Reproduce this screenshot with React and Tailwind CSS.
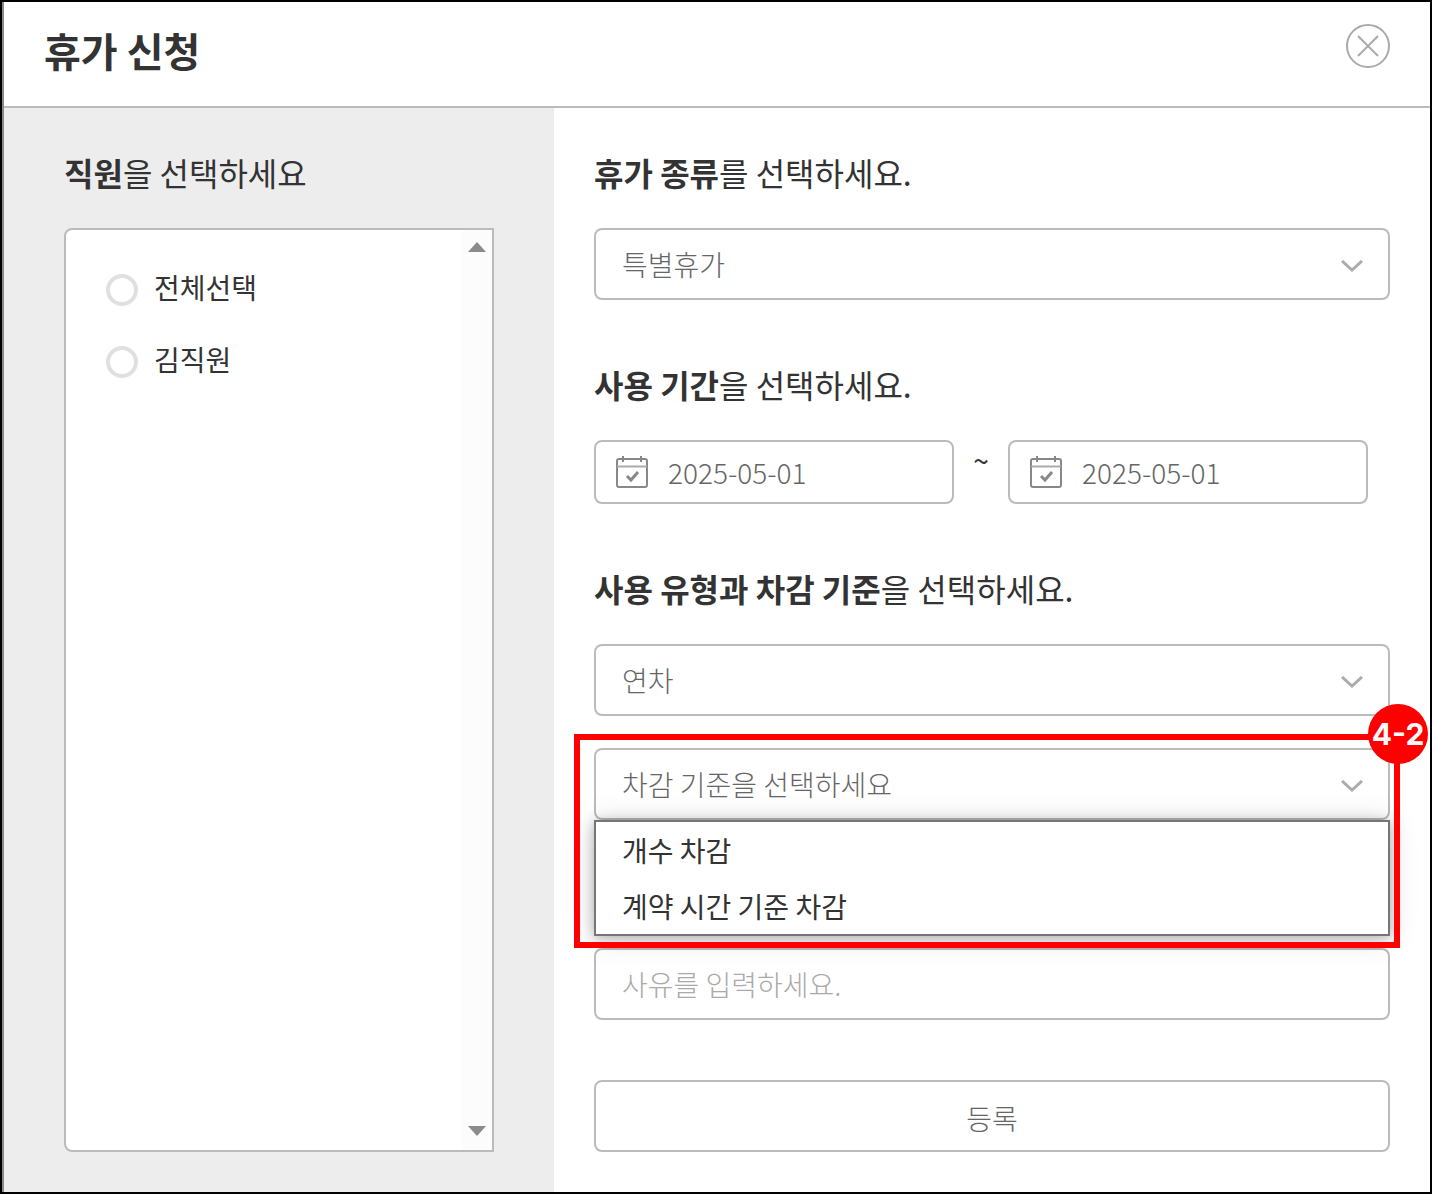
import React, { useState } from 'react';
import { clsx } from 'clsx';

const fieldClass =
  'w-full rounded-lg border-2 border-[#bbb] bg-white text-[28px] font-light text-[#666] outline-none';

const employees = [
  { id: 'all', name: '전체선택' },
  { id: 'kim', name: '김직원' },
];

const CloseIcon = () => (
  <svg className="size-11" viewBox="0 0 44 44" fill="none" stroke="#aaa" strokeWidth="2">
    <circle cx="22" cy="22" r="21" />
    <path d="M12 12l20 20M32 12L12 32" />
  </svg>
);

const ChevronIcon = () => (
  <svg
    className="pointer-events-none absolute top-1/2 right-[27px] -mt-1 h-3 w-[22px]"
    viewBox="0 0 22 12"
    fill="none"
    stroke="#aaa"
    strokeWidth="3"
  >
    <path d="M1 1l10 9l10-9" />
  </svg>
);

const CalendarIcon = () => (
  <svg className="size-8 shrink-0" viewBox="0 0 32 32" fill="none" stroke="#888" strokeWidth="2">
    <rect x="1" y="3" width="30" height="28" rx="2" />
    <path d="M1 10.500h30" stroke="#aaa" />
    <path d="M7 0v6M25 0v6" />
    <path d="M11 20l4 4l7-8" strokeWidth="3" />
  </svg>
);

// Question title, e.g. "휴가 종류를 선택하세요."
const Heading = ({ id, strong, children }) => (
  <h2 id={id} className="text-[32px] leading-11 text-[#333]">
    <strong className="font-bold">{strong}</strong>
    {children}
  </h2>
);

const SelectField = ({ label, value }) => (
  <div className="relative">
    <select aria-label={label} className={clsx(fieldClass, 'block h-18 appearance-none px-[26px]')}>
      <option>{value}</option>
    </select>
    <ChevronIcon />
  </div>
);

const DateField = ({ label, value, onChange }) => (
  <label className={clsx(fieldClass, 'flex h-16 min-w-0 flex-1 items-center gap-5 px-5')}>
    <CalendarIcon />
    <input
      type="text"
      aria-label={label}
      value={value}
      onChange={(e) => onChange(e.target.value)}
      className="w-full min-w-0 bg-transparent outline-none"
    />
  </label>
);

const EmployeeList = () => {
  const [selected, setSelected] = useState(null);

  return (
    <div className="mt-[34px] flex flex-1 rounded-l-lg border-2 border-[#bbb] bg-white">
      <div role="radiogroup" aria-labelledby="employee-title" className="flex-1 py-6 pl-10">
        {employees.map((employee) => (
          <label key={employee.id} className="flex h-18 items-center gap-4 text-[28px] text-[#333]">
            <input
              type="radio"
              name="employee"
              checked={selected === employee.id}
              onChange={() => setSelected(employee.id)}
              className="size-8 appearance-none rounded-full border-4 border-[#e0e0e0] checked:border-[#666]"
            />
            <span className="pb-1.5">{employee.name}</span>
          </label>
        ))}
      </div>
      <div className="flex w-[30px] flex-col items-center justify-between bg-[#fcfcfc] pt-3 pb-3.5">
        <svg className="h-2.5 w-[18px]" viewBox="0 0 18 10" fill="#8b8b8b">
          <path d="M9 0l9 10H0z" />
        </svg>
        <svg className="h-2.5 w-[18px]" viewBox="0 0 18 10" fill="#8b8b8b">
          <path d="M0 0h18l-9 10z" />
        </svg>
      </div>
    </div>
  );
};

// Deduction select with its menu opened and the step marker around it
const DeductionField = () => (
  <div className="relative mt-8">
    <SelectField label="차감 기준" value="차감 기준을 선택하세요" />
    <ul
      role="listbox"
      aria-label="차감 기준"
      className="absolute inset-x-0 top-full border-2 border-[#767676] bg-white text-[28px] leading-14 text-[#333] shadow-[0_2px_28px_rgba(0,0,0,0.15),0_2px_12px_rgba(0,0,0,0.25)]"
    >
      <li role="option" aria-selected="false" className="px-[26px]">
        개수 차감
      </li>
      <li role="option" aria-selected="false" className="px-[26px]">
        계약 시간 기준 차감
      </li>
    </ul>
    <div className="pointer-events-none absolute -top-3.5 -right-2.5 -left-5 h-[214px] border-6 border-[#f00]">
      <span className="absolute -top-9 -right-[34px] flex size-15 items-center justify-center rounded-full bg-[#f00] font-['Inter',sans-serif] text-[30px] font-bold text-[#fafafa]">
        4-2
      </span>
    </div>
  </div>
);

const App = () => {
  const [startDate, setStartDate] = useState('2025-05-01');
  const [endDate, setEndDate] = useState('2025-05-01');

  return (
    <div className="flex min-h-screen flex-col border-2 border-black bg-white font-['Noto_Sans_CJK_KR',sans-serif]">
      <div className="flex flex-1 flex-col border-l-2 border-[#8c8888]">
        <header className="flex h-[106px] items-start justify-between border-b-2 border-[#bbb] px-10">
          <h1 className="pt-5 text-[40px] leading-14 font-bold text-[#333]">휴가 신청</h1>
          <button type="button" aria-label="닫기" className="mt-[22px]">
            <CloseIcon />
          </button>
        </header>

        <main className="grid flex-1 grid-cols-[550px_1fr]">
          <section className="flex flex-col bg-[#ededed] px-15 pt-[42px] pb-10">
            <Heading id="employee-title" strong="직원">을 선택하세요</Heading>
            <EmployeeList />
          </section>

          <section className="px-10 pt-[42px] pb-10">
            <Heading strong="휴가 종류">를 선택하세요.</Heading>
            <div className="mt-[34px]">
              <SelectField label="휴가 종류" value="특별휴가" />
            </div>

            <div className="mt-[62px]">
              <Heading strong="사용 기간">을 선택하세요.</Heading>
            </div>
            <div className="mt-[34px] flex pr-[22px]">
              <DateField label="시작일" value={startDate} onChange={setStartDate} />
              <span className="w-[54px] text-center text-[28px] leading-10 text-[#333]">~</span>
              <DateField label="종료일" value={endDate} onChange={setEndDate} />
            </div>

            <div className="mt-[62px]">
              <Heading strong="사용 유형과 차감 기준">을 선택하세요.</Heading>
            </div>
            <div className="mt-[34px]">
              <SelectField label="사용 유형" value="연차" />
            </div>
            <DeductionField />

            <input
              type="text"
              aria-label="사유"
              placeholder="사유를 입력하세요."
              className={clsx(fieldClass, 'mt-32 block h-18 px-[26px] placeholder:text-[#aaa]')}
            />
            <button type="button" className={clsx(fieldClass, 'mt-15 block h-18 pt-1')}>
              등록
            </button>
          </section>
        </main>
      </div>
    </div>
  );
};

export default App;
